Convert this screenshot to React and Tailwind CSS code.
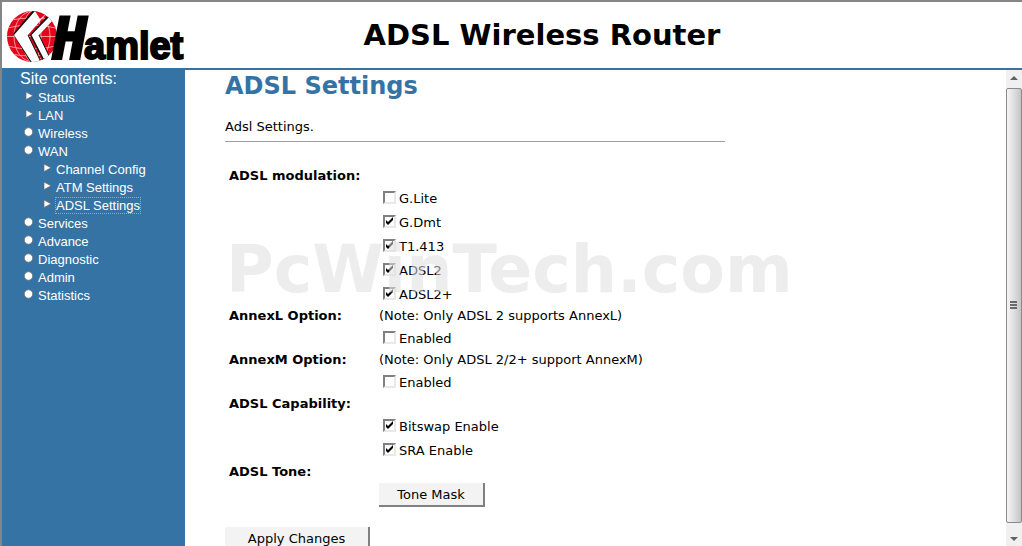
import React, { useState } from 'react'

const menu = [
    { label: 'Status', type: 'page' },
    { label: 'LAN', type: 'page' },
    { label: 'Wireless', type: 'folder' },
    {
        label: 'WAN',
        type: 'folder',
        children: [
            { label: 'Channel Config', type: 'page' },
            { label: 'ATM Settings', type: 'page' },
            { label: 'ADSL Settings', type: 'page', active: true },
        ],
    },
    { label: 'Services', type: 'folder' },
    { label: 'Advance', type: 'folder' },
    { label: 'Diagnostic', type: 'folder' },
    { label: 'Admin', type: 'folder' },
    { label: 'Statistics', type: 'folder' },
]

const settings = [
    { title: 'ADSL modulation:', options: [['glite', 'G.Lite'], ['gdmt', 'G.Dmt'], ['t1413', 'T1.413'], ['adsl2', 'ADSL2'], ['adsl2p', 'ADSL2+']] },
    { title: 'AnnexL Option:', note: '(Note: Only ADSL 2 supports AnnexL)', options: [['annexl', 'Enabled']] },
    { title: 'AnnexM Option:', note: '(Note: Only ADSL 2/2+ support AnnexM)', options: [['annexm', 'Enabled']] },
    { title: 'ADSL Capability:', options: [['bitswap', 'Bitswap Enable'], ['sra', 'SRA Enable']] },
]

function Logo() {
    return (
        <svg width="190" height="64" viewBox="0 0 190 64" role="img" aria-label="Hamlet" className="shrink-0">
            <defs>
                <clipPath id="globe">
                    <ellipse cx="30" cy="33.5" rx="25" ry="25.5" />
                </clipPath>
            </defs>
            <g clipPath="url(#globe)">
                <rect x="4" y="7" width="52" height="54" fill="#e3051b" />
                <g fill="none" stroke="#fbb" strokeWidth="0.8">
                    <ellipse cx="30" cy="33.5" rx="18" ry="25" />
                    <ellipse cx="30" cy="33.5" rx="9" ry="25" />
                    <path d="M4 33.5H55M5 25Q29 19 54 25M9 17Q29 13 49 17M5 43Q29 49 54 43M9 51Q29 55 49 51" />
                </g>
                {/* shadow edges first, white chevrons on top */}
                <path d="M31 7L11 31L29 60H33L14 32L35 8Z" fill="#111" />
                <path d="M45 13L28 32L41 58H45L31 32L48 14Z" fill="#111" />
                <path d="M33 8L12 32L31 61L38 57L26 32L44 11L40 7Z" fill="#fff" />
                <path d="M38 57L26 32" fill="none" stroke="#111" strokeWidth="1" />
                <path d="M33 8L40 7L44 11L38 16Z" fill="#e3051b" />
                <path d="M48 13L29.5 32L43 58L48 55L37 32L51 17Z" fill="#fff" />
                <path d="M48 55L37 32" fill="none" stroke="#111" strokeWidth="1" />
            </g>
            <g fill="#000" stroke="#000" strokeWidth="2" fontWeight="700">
                <text x="51" y="56" fontSize="56" fontStyle="italic" strokeWidth="3" fontFamily="'DejaVu Sans Mono', monospace">H</text>
                <text x="82" y="56" fontSize="38" fontFamily="'Liberation Sans', sans-serif">amlet</text>
            </g>
        </svg>
    )
}

function Bullet({ type }) {
    return (
        <svg width="10" height="10" viewBox="0 0 10 10" className="mb-0.5 shrink-0" aria-hidden="true">
            {type === 'page'
                ? <path d="M3 1V8.6L10 4.8Z" fill="#fff" stroke="#6b6b6b" strokeWidth="0.7" />
                : <circle cx="5.5" cy="5" r="4.2" fill="#fff" stroke="#6b6b6b" strokeWidth="0.7" />}
        </svg>
    )
}

function MenuList({ items, nested }) {
    return (
        <ul className={nested ? 'pl-[18px]' : 'pl-[21px]'}>
            {items.map((item) => (
                <li key={item.label}>
                    <div className="flex h-[18px] items-center gap-[5px]">
                        <Bullet type={item.type} />
                        <a href="#" className={item.active ? 'leading-[15px] outline-1 outline-dotted outline-[#e0935a]' : 'leading-[15px]'}>
                            {item.label}
                        </a>
                    </div>
                    {item.children && <MenuList items={item.children} nested />}
                </li>
            ))}
        </ul>
    )
}

function CheckOption({ label, checked, onChange }) {
    return (
        <label className="flex h-6 items-center gap-[3px] pb-0.5 pl-1">
            <span className="grid">
                <input
                    type="checkbox"
                    checked={checked}
                    onChange={onChange}
                    className="peer col-start-1 row-start-1 size-[13px] appearance-none border-2 border-t-[#808080] border-l-[#808080] border-r-[#e8e8e8] border-b-[#e8e8e8] bg-white"
                />
                <svg viewBox="0 0 13 13" className="pointer-events-none invisible col-start-1 row-start-1 size-[13px] peer-checked:visible" aria-hidden="true">
                    <path d="M3 5V8L5 10L10 5V2L5 7Z" fill="#000" />
                </svg>
            </span>
            <span className="pt-1">{label}</span>
        </label>
    )
}

function FormButton({ children, className }) {
    return (
        <button type="button" className={`h-6 border-r-2 border-b-2 border-[#808080] bg-[#f3f3f3] pt-0.5 ${className}`}>
            {children}
        </button>
    )
}

function ScrollBar() {
    return (
        <div className="flex w-4 shrink-0 flex-col bg-[#f0f0f0]" aria-hidden="true">
            <svg viewBox="0 0 16 18" className="h-[18px] w-4"><path d="M4 10L8 6L12 10Z" fill="#606060" /></svg>
            <div className="flex flex-1 items-center justify-center rounded-xs border border-[#8a8a8a] bg-linear-to-r from-[#f5f5f5] via-[#dedee0] to-[#c4c4c8]">
                <svg width="8" height="9" viewBox="0 0 8 9"><path d="M0 1H7M0 4H7M0 7H7" stroke="#444" strokeWidth="1.4" /></svg>
            </div>
            <svg viewBox="0 0 16 23" className="h-[23px] w-4"><path d="M4 14L8 18L12 14Z" fill="#606060" /></svg>
        </div>
    )
}

export default function App() {
    const [values, setValues] = useState({ gdmt: true, t1413: true, adsl2: true, adsl2p: true, bitswap: true, sra: true })

    function toggle(id) {
        setValues((v) => ({ ...v, [id]: !v[id] }))
    }

    return (
        <div className="flex h-screen flex-col overflow-hidden border-t-2 border-l-2 border-[#858585] bg-white font-['DejaVu_Sans',sans-serif] text-[13px] text-black">
            <header className="flex h-[68px] shrink-0 items-center border-b-2 border-[#3573a5]">
                <Logo />
                <h1 className="flex-1 pt-0.5 pr-[130px] text-center text-[29px] font-bold">ADSL Wireless Router</h1>
            </header>

            <div className="flex min-h-0 flex-1">
                <nav className="w-[183px] shrink-0 bg-[#3573a5] font-['Liberation_Sans',sans-serif] text-white">
                    <h2 className="pl-[18px] text-base leading-[18px]">Site contents:</h2>
                    <MenuList items={menu} />
                </nav>

                <main className="relative min-w-0 flex-1 overflow-hidden pl-10">
                    <h2 className="text-2xl leading-8 font-bold text-[#3573a5]">ADSL Settings</h2>
                    <p className="mt-[15px] leading-5">Adsl Settings.</p>
                    <hr className="mt-1 mb-6 w-[500px] border-[#a0a0a0]" />

                    <form>
                        <table className="border-collapse">
                            <tbody>
                                {settings.map((group) => (
                                    <React.Fragment key={group.title}>
                                        <tr className="h-5">
                                            <th className="w-[154px] pl-1 text-left leading-5 font-bold">{group.title}</th>
                                            <td className="leading-5">{group.note}</td>
                                        </tr>
                                        <tr>
                                            <td />
                                            <td>
                                                {group.options.map(([id, label]) => (
                                                    <CheckOption key={id} label={label} checked={!!values[id]} onChange={() => toggle(id)} />
                                                ))}
                                            </td>
                                        </tr>
                                    </React.Fragment>
                                ))}
                                <tr className="h-5">
                                    <th className="pl-1 text-left leading-5 font-bold">ADSL Tone:</th>
                                    <td />
                                </tr>
                                <tr>
                                    <td />
                                    <td className="pt-px"><FormButton className="w-[106px]">Tone Mask</FormButton></td>
                                </tr>
                            </tbody>
                        </table>
                        <FormButton className="mt-5 w-[145px]">Apply Changes</FormButton>
                    </form>

                    <div className="pointer-events-none absolute top-[161px] left-[41px] text-[65px] leading-[78px] font-bold text-[#dedede]/55">PcWinTech.com</div>
                </main>

                <ScrollBar />
            </div>
        </div>
    )
}
